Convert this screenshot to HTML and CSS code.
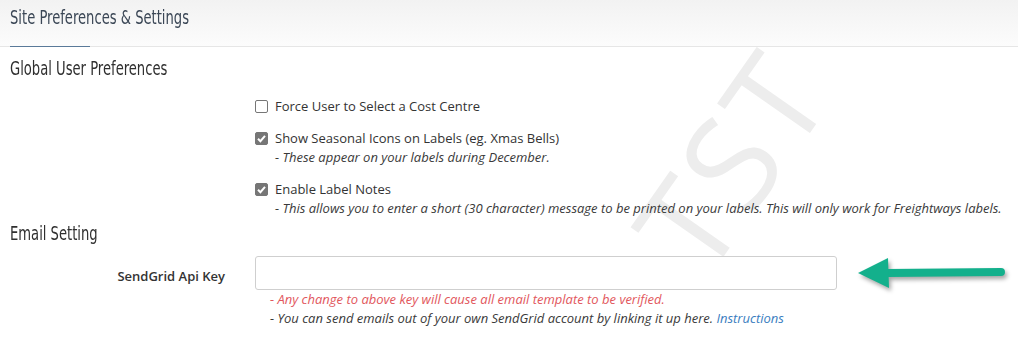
FILE: index.html
```html
<!DOCTYPE html>
<html lang="en">
<head>
<meta charset="utf-8">
<title>Site Preferences &amp; Settings</title>
<link rel="stylesheet" href="styles.css">
</head>
<body>
<div class="page">
  <div class="watermark">TST</div>
  <header class="page-header">
    <h1 class="page-title">Site Preferences &amp; Settings</h1>
  </header>
  <div class="tabbar"><span class="tab-active"></span></div>

  <main class="content">
    <h2 class="section-title">Global User Preferences</h2>
    <div class="form-row">
      <div class="form-label"></div>
      <div class="form-field">
        <div class="check-item">
          <div class="check-line"><span class="box"></span><span>Force User to Select a Cost Centre</span></div>
        </div>
        <div class="check-item">
          <div class="check-line"><span class="box checked"><svg viewBox="0 0 13 13" width="13" height="13"><path d="M3 6.8 L5.4 9.2 L10 3.9" fill="none" stroke="#fff" stroke-width="2"/></svg></span><span>Show Seasonal Icons on Labels (eg. Xmas Bells)</span></div>
          <p class="help">- These appear on your labels during December.</p>
        </div>
        <div class="check-item">
          <div class="check-line"><span class="box checked"><svg viewBox="0 0 13 13" width="13" height="13"><path d="M3 6.8 L5.4 9.2 L10 3.9" fill="none" stroke="#fff" stroke-width="2"/></svg></span><span>Enable Label Notes</span></div>
          <p class="help">- This allows you to enter a short (30 character) message to be printed on your labels. This will only work for Freightways labels.</p>
        </div>
      </div>
    </div>

    <h2 class="section-title email-title">Email Setting</h2>
    <div class="form-row">
      <label class="form-label key-label" for="sg">SendGrid Api Key</label>
      <div class="form-field">
        <input id="sg" class="text-input" type="text">
        <p class="help input-help warn">- Any change to above key will cause all email template to be verified.</p>
        <p class="help input-help">- You can send emails out of your own SendGrid account by linking it up here. <a href="#" class="link">Instructions</a></p>
      </div>
    </div>
  </main>

  <svg class="arrow" width="160" height="46" viewBox="0 0 160 46">
    <line x1="34" y1="21" x2="148" y2="20" stroke="#13b08c" stroke-width="8" stroke-linecap="round"/>
    <path d="M5 21 L35 6 L36 36 Z" fill="#13b08c"/>
  </svg>
</div>
</body>
</html>
```

FILE: styles.css
```css
* { box-sizing: border-box; }
html, body { margin: 0; padding: 0; background: #fff; }
body {
  font-family: "Open Sans", "Liberation Sans", sans-serif;
  font-size: 13px;
  color: #333;
}
.page {
  position: relative;
  width: 1018px;
  height: 337px;
  overflow: hidden;
}
.page-header {
  height: 46px;
  padding: 4px 10px 0;
  background: linear-gradient(#f2f2f2, #fcfcfc);
}
.page-title,
.section-title {
  font-family: "DejaVu Sans", sans-serif;
  font-stretch: condensed;
  font-weight: normal;
  font-size: 20px;
  line-height: 26px;
  transform: scaleX(0.73);
  transform-origin: left center;
  white-space: nowrap;
}
.page-title {
  margin: 0;
  color: #3b4756;
}
.tabbar {
  height: 1px;
  background: #e6e6e6;
  padding-left: 10px;
}
.tab-active {
  display: block;
  width: 80px;
  height: 1px;
  background: #5a7a99;
}
.content { position: relative; z-index: 1; }
.section-title {
  margin: 8px 0 0 10px;
  color: #2f2f2f;
}
.email-title { margin-top: 2px; }
.form-row {
  display: grid;
  grid-template-columns: 225px 582px;
  column-gap: 30px;
}
.check-item { margin-top: 12px; }
.check-item:first-child { margin-top: 15px; }
.check-line {
  display: flex;
  align-items: center;
  gap: 7px;
  line-height: 20px;
}
.box {
  display: block;
  width: 13px;
  height: 13px;
  border: 1px solid #767676;
  border-radius: 2px;
  background: #fff;
  position: relative;
}
.box.checked { background: #767676; border-color: #767676; }
.box svg { position: absolute; left: -1px; top: -1px; }
.help {
  margin: 0;
  padding-left: 20px;
  font-size: 13px;
  line-height: 19px;
  font-style: italic;
  color: #3a3a3a;
  white-space: nowrap;
}
.form-row:last-child { margin-top: 10px; }
.key-label {
  text-align: right;
  font-weight: 600;
  font-size: 13px;
  line-height: 20px;
  padding-top: 10px;
  color: #333;
}
.text-input {
  display: block;
  width: 582px;
  height: 34px;
  border: 1px solid #cfcfcf;
  border-radius: 3px;
  background: #fff;
  margin: 0;
}
.input-help { padding-left: 15px; }
.warn { color: #e2575d; }
.link { color: #3a7dc0; text-decoration: none; }
.watermark {
  position: absolute;
  left: 600px;
  top: 95px;
  width: 260px;
  text-align: center;
  font-family: "Open Sans", sans-serif;
  font-weight: 400;
  font-size: 130px;
  line-height: 130px;
  letter-spacing: 4px;
  color: #ededed;
  transform: rotate(-55deg);
  pointer-events: none;
  z-index: 0;
}
.arrow {
  position: absolute;
  left: 853px;
  top: 252px;
  filter: drop-shadow(2px 3px 2px rgba(0,0,0,0.35));
  z-index: 2;
}
```
